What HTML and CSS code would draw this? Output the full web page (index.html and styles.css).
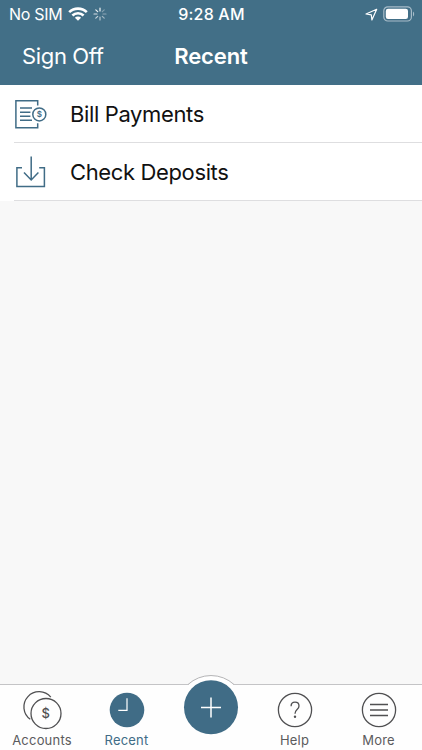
FILE: index.html
```
<!DOCTYPE html>
<html lang="en">
<head>
    <meta charset="UTF-8">
    <meta name="viewport" content="width=device-width, initial-scale=1.0">
    <title>Recent</title>
    <link rel="stylesheet" href="styles.css">
</head>
<body>
    <header class="header">
        <div class="status-bar">
            <div class="status-left">
                <span class="carrier">No SIM</span>
                <svg class="wifi" width="20" height="14" viewBox="0 0 20 14" fill="none" stroke="#fff" stroke-width="2.6">
                    <path d="M1.2 5.2a12.5 12.5 0 0 1 17.6 0"/>
                    <path d="M4.4 8.5a8 8 0 0 1 11.2 0"/>
                    <path d="M10 13.8L6.9 10.7a4.4 4.4 0 0 1 6.2 0z" fill="#fff" stroke="none"/>
                </svg>
                <svg class="spinner" width="14" height="14" viewBox="0 0 14 14" stroke="#fff" stroke-width="1.2" stroke-linecap="round">
                    <path d="M7 1v3" opacity=".95"/>
                    <path d="M11.2 2.8L9.3 4.7" opacity=".35"/>
                    <path d="M13 7h-3" opacity=".4"/>
                    <path d="M11.2 11.2L9.3 9.3" opacity=".5"/>
                    <path d="M7 13v-3" opacity=".6"/>
                    <path d="M2.8 11.2l1.9-1.9" opacity=".7"/>
                    <path d="M1 7h3" opacity=".8"/>
                    <path d="M2.8 2.8l1.9 1.9" opacity=".9"/>
                </svg>
            </div>
            <span class="time">9:28 AM</span>
            <div class="status-right">
                <svg width="13" height="13" viewBox="0 0 13 13" fill="none" stroke="#fff" stroke-width="1.2" stroke-linejoin="round">
                    <path d="M11.7 1.3L1 6l5.3.8.6 5.2z"/>
                </svg>
                <svg width="32" height="16" viewBox="0 0 32 16">
                    <rect x=".8" y=".8" width="27.6" height="14.2" rx="4" fill="none" stroke="#a7bcc9" stroke-width="1.2"/>
                    <rect x="2.8" y="2.8" width="22.2" height="10.2" rx="2.2" fill="#fff"/>
                    <path d="M30 5.4c1.6.9 1.6 4.1 0 5z" fill="#a7bcc9"/>
                </svg>
            </div>
        </div>
        <div class="nav-bar">
            <a class="sign-off">Sign Off</a>
            <h1 class="title">Recent</h1>
        </div>
    </header>

    <main class="content">
        <ul class="list">
            <li class="list-item">
                <svg class="list-icon" width="34" height="32" viewBox="0 0 34 32" fill="none" stroke="#406c86" stroke-width="1.5">
                    <path d="M23.7 7.6V2.7H1.9v27h21.8v-4.4"/>
                    <path d="M6 10h12M6 14.2h10.4M6 18.2h10.4M6 22.3h12"/>
                    <circle cx="25.3" cy="16.4" r="6.5"/>
                    <text class="coin-small" x="25.3" y="19.3">$</text>
                </svg>
                <span class="list-label">Bill Payments</span>
            </li>
            <li class="list-item">
                <svg class="list-icon" width="34" height="32" viewBox="0 0 34 32" fill="none" stroke="#406c86" stroke-width="1.5">
                    <path d="M8 11.8H2.9v18.6h27.5V11.8h-5.2"/>
                    <path d="M17.2.5v23.4M10 16.4l7.2 7.5 7.2-7.5"/>
                </svg>
                <span class="list-label">Check Deposits</span>
            </li>
        </ul>
    </main>

    <nav class="tab-bar">
        <a class="tab">
            <svg class="tab-icon" width="44" height="42" viewBox="0 0 44 42" fill="none" stroke="#505052" stroke-width="1.3">
                <path d="M30.8 11.2A15.2 15.2 0 1 0 10.3 33.3"/>
                <circle cx="26" cy="27.5" r="15"/>
                <text class="coin" x="25.8" y="31.9">$</text>
            </svg>
            <span class="tab-label">Accounts</span>
        </a>
        <a class="tab active">
            <svg class="tab-icon" width="44" height="42" viewBox="0 0 44 42" fill="none">
                <circle cx="22" cy="24" r="17.3" fill="#406c86"/>
                <path d="M22 12.2v12.2h-8.7" stroke="#fff" stroke-width="1.2"/>
            </svg>
            <span class="tab-label">Recent</span>
        </a>
        <a class="tab add">
            <svg class="add-icon" width="60" height="62" viewBox="0 0 60 62" fill="none">
                <path d="M7 11A34 34 0 0 1 53 11V14H7z" fill="#fff"/>
                <path d="M7 10.5A34 34 0 0 1 53 10.5" stroke="#b5b5b7"/>
                <circle cx="30" cy="33.3" r="27" fill="#406c86"/>
                <path d="M20 33.4h20M30 23.4v20" stroke="#fff" stroke-width="1.5"/>
            </svg>
        </a>
        <a class="tab">
            <svg class="tab-icon" width="44" height="42" viewBox="0 0 44 42" fill="none" stroke="#505052" stroke-width="1.3">
                <circle cx="22" cy="24" r="16.6"/>
                <path d="M18.1 20.2c0-2.6 1.6-4 3.9-4s4 1.4 4 3.7c0 3.9-4 3.4-4 7.8"/>
                <circle cx="22" cy="30.8" r="1.2" fill="#505052" stroke="none"/>
            </svg>
            <span class="tab-label">Help</span>
        </a>
        <a class="tab">
            <svg class="tab-icon" width="44" height="42" viewBox="0 0 44 42" fill="none" stroke="#505052" stroke-width="1.3">
                <circle cx="22" cy="24" r="16.6"/>
                <path d="M13 18.5h18M13 24h18M13 29.5h18" stroke-width="1.4"/>
            </svg>
            <span class="tab-label">More</span>
        </a>
    </nav>
</body>
</html>
```

FILE: styles.css
```
body {
    margin: 0;
    height: 750px;
    display: flex;
    flex-direction: column;
    overflow: hidden;
    background-color: #f8f8f8;
    font-family: Inter, Roboto, sans-serif;
    color: #111;
}
.header {
    height: 85px;
    flex-shrink: 0;
    background-color: #426f87;
    color: #fff;
}
.status-bar {
    height: 28px;
    display: grid;
    grid-template-columns: 1fr auto 1fr;
    align-items: center;
    padding: 0 8px 0 9px;
    font-size: 16px;
}
.status-left, .status-right {
    display: flex;
    align-items: center;
}
.status-right {
    justify-content: flex-end;
    gap: 5px;
    margin-right: -1px;
}
.carrier {
    letter-spacing: -0.3px;
}
.wifi {
    margin-left: 6px;
}
.spinner {
    margin-left: 5px;
}
.time {
    font-weight: 500;
    letter-spacing: 0.2px;
}
.nav-bar {
    height: 56px;
    display: grid;
    grid-template-columns: 1fr auto 1fr;
    align-items: center;
    padding: 0 22px;
}
.sign-off {
    font-size: 22px;
    letter-spacing: -0.35px;
}
.title {
    margin: 0;
    font-size: 22px;
    font-weight: 600;
    letter-spacing: -0.1px;
}
.content {
    flex: 1;
}
.list {
    margin: 0;
    padding: 0;
    list-style: none;
    background-color: #fff;
}
.list-item {
    height: 58px;
    box-sizing: border-box;
    display: flex;
    align-items: center;
    padding-left: 14px;
    background: linear-gradient(#dedee0, #dedee0) 14px 100% / 100% 1px no-repeat;
}
.list-label {
    margin-left: 22px;
    font-size: 22px;
    letter-spacing: -0.37px;
}
.coin-small {
    font-size: 8px;
    font-weight: 600;
    text-anchor: middle;
    fill: #406c86;
    stroke: none;
}
.tab-bar {
    height: 66px;
    flex-shrink: 0;
    box-sizing: border-box;
    display: grid;
    grid-template-columns: 84px 85px 84px 83px 85px;
    border-top: 1px solid #c4c4c6;
    background-color: #fefefe;
}
.tab {
    display: flex;
    flex-direction: column;
    align-items: center;
    color: #5b5b5d;
}
.tab.active {
    color: #406c86;
}
.tab-icon {
    margin-top: 1px;
    overflow: visible;
}
.tab-label {
    margin-top: 4px;
    font-size: 13px;
    line-height: 16px;
    letter-spacing: 0.2px;
}
.coin {
    font-size: 13px;
    font-weight: 500;
    text-anchor: middle;
    fill: #505052;
    stroke: none;
}
/* the add button rises above the bar */
.add-icon {
    margin-top: -11px;
}
```
